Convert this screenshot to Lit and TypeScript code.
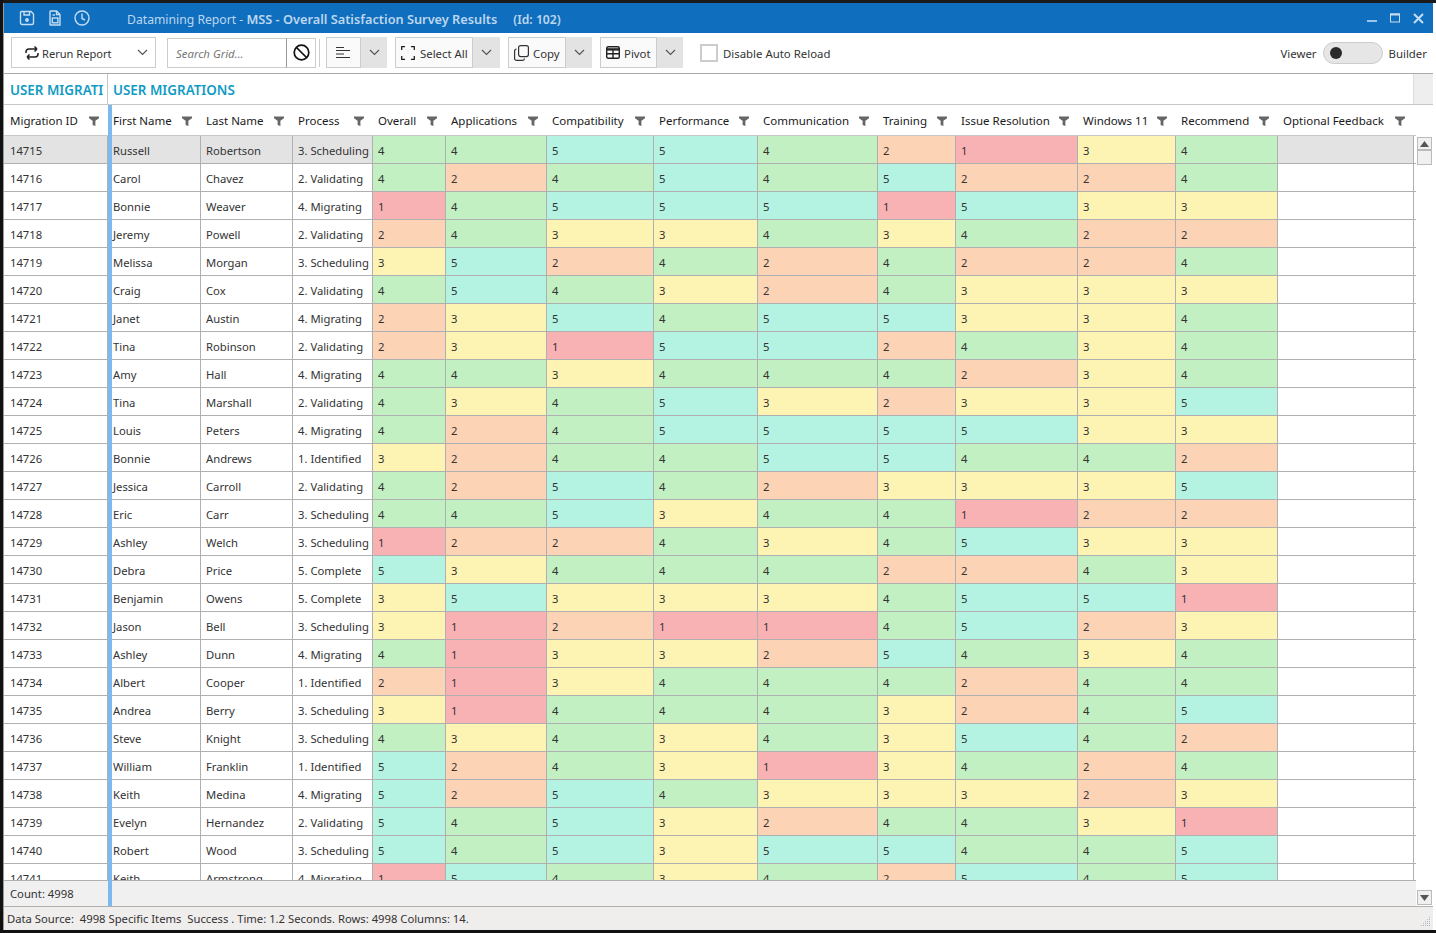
import { LitElement, html, css, svg } from "lit";
import { customElement } from "lit/decorators.js";

const RAW = `14715 Russell Robertson 3.Scheduling 445542134
14716 Carol Chavez 2.Validating 424545224
14717 Bonnie Weaver 4.Migrating 145551533
14718 Jeremy Powell 2.Validating 243343422
14719 Melissa Morgan 3.Scheduling 352424224
14720 Craig Cox 2.Validating 454324333
14721 Janet Austin 4.Migrating 235455334
14722 Tina Robinson 2.Validating 231552434
14723 Amy Hall 4.Migrating 443444234
14724 Tina Marshall 2.Validating 434532335
14725 Louis Peters 4.Migrating 424555533
14726 Bonnie Andrews 1.Identified 324455442
14727 Jessica Carroll 2.Validating 425423335
14728 Eric Carr 3.Scheduling 445344122
14729 Ashley Welch 3.Scheduling 122434533
14730 Debra Price 5.Complete 534442243
14731 Benjamin Owens 5.Complete 353334551
14732 Jason Bell 3.Scheduling 312114523
14733 Ashley Dunn 4.Migrating 413325434
14734 Albert Cooper 1.Identified 213444244
14735 Andrea Berry 3.Scheduling 314443245
14736 Steve Knight 3.Scheduling 434343542
14737 William Franklin 1.Identified 524313424
14738 Keith Medina 4.Migrating 525433323
14739 Evelyn Hernandez 2.Validating 545324431
14740 Robert Wood 3.Scheduling 545355445
14741 Keith Armstrong 4.Migrating 154342545`;

const ROWS = RAW.split("\n").map((l) => {
  const [id, first, last, proc, scores] = l.split(" ");
  return { id, first, last, proc: proc.replace(".", ". "), scores: scores.split("") };
});

const COLS = ["First Name", "Last Name", "Process", "Overall", "Applications", "Compatibility", "Performance", "Communication", "Training", "Issue Resolution", "Windows 11", "Recommend", "Optional Feedback"];

const funnel = html`<svg class="funnel" width="10" height="10" viewBox="0 0 10 10"><path d="M0 0.5H10V2.2L6.4 4.8V10L3.6 9V4.8L0 2.2Z" fill="#666"/></svg>`;
const chevron = html`<svg width="11" height="7" viewBox="0 0 11 7" fill="none" stroke="#555" stroke-width="1.2"><path d="M1 1L5.5 5.5L10 1"/></svg>`;

const tIcon = (body: unknown) => html`<svg class="ticon" width="16" height="16" viewBox="0 0 16 16" fill="none" stroke="#c5def3" stroke-width="1.4">${body}</svg>`;
const saveIcon = tIcon(svg`<path d="M2.5 1.5H12L14.5 4V13A1.5 1.5 0 0 1 13 14.5H3A1.5 1.5 0 0 1 1.5 13V2.5A1 1 0 0 1 2.5 1.5Z"/><path d="M5 1.5V5H10.5V1.5"/><circle cx="8" cy="10" r="1.2" fill="#c5def3"/>`);
const docIcon = tIcon(svg`<path d="M3.5 1H9.5L13 4.5V15H3.5A0.5 0.5 0 0 1 3 14.5V1.5A.5.5 0 0 1 3.5 1Z"/><path d="M9.5 1V4.5H13"/><rect x="5.3" y="8" width="5.6" height="4.8"/><path d="M5.5 5H8"/>`);
const clockIcon = tIcon(svg`<circle cx="8" cy="8" r="7"/><path d="M8 3.5V8.5L11 10"/>`);

@customElement("app-root")
export class AppRoot extends LitElement {
  static styles = css`
    :host {
      display: block;
      width: 1436px;
      height: 933px;
      box-sizing: border-box;
      padding: 3px 3px 3px 3px;
      background: linear-gradient(#1a1a1a 0 3px, #fff 3px 930px, #111 930px);
      font-family: "Noto Sans", "Open Sans", sans-serif;
      font-size: 11.25px;
      color: #333;
      overflow: hidden;
      position: relative;
    }
    :host::before {
      content: "";
      position: absolute;
      left: 0;
      top: 0;
      bottom: 0;
      width: 3px;
      background: #111;
    }
    .window {
      height: 927px;
      width: 1430px;
      display: flex;
      flex-direction: column;
      background: #fff;
      box-sizing: border-box;
      border-left: 1px solid #999;
      overflow: hidden;
    }
    .title {
      height: 30px;
      flex: none;
      background: #106ebe;
      margin-left: -1px;
      display: flex;
      align-items: center;
      padding-left: 16px;
      color: #bcd7ef;
      font-size: 12.2px;
    }
    .ticons { display: flex; gap: 11.5px; width: 108px; align-items: center; }
    .ticon { flex: none; }
    .ttext { padding-top: 2px; }
    .ttext b { font-weight: 600; font-size: 12.75px; }
    .ttext .id { margin-left: 16px; font-weight: 600; }
    .wbtns { margin-left: auto; display: flex; gap: 13px; padding-right: 9px; align-items: center; }
    .toolbar {
      height: 41px;
      flex: none;
      box-sizing: border-box;
      border-bottom: 1px solid #aaa;
      display: flex;
      align-items: center;
      padding-left: 7px;
      padding-bottom: 1px;
      color: #333;
      font-size: 11.4px;
    }
    .toolbar span { display: block; padding-top: 2px; }
    .btn {
      height: 31px;
      box-sizing: border-box;
      border: 1px solid #ccc;
      background: #fafafa;
      display: flex;
      align-items: center;
      white-space: nowrap;
    }
    .rerun { width: 145px; background: #fff; padding-left: 12px; gap: 2px; }
    .rerun .lbl { font-size: 11.1px; }
    .toolbar .chev { margin-left: auto; margin-right: 7px; display: flex; padding-top: 0; }
    .search {
      height: 30px;
      box-sizing: border-box;
      width: 120px;
      margin-left: 11px;
      border: 1px solid #ccc;
      border-right: 1px solid #999;
      padding: 2px 0 0 8px;
      display: flex;
      align-items: center;
      font-style: italic;
      color: #777;
    }
    .stop {
      height: 30px;
      width: 29px;
      box-sizing: border-box;
      border: 1px solid #ccc;
      border-left: none;
      display: flex;
      align-items: center;
      justify-content: center;
    }
    .sep { width: 1px; height: 28px; background: #ccc; margin: 0 6px 0 3px; }
    .drop {
      height: 31px;
      background: #e3e3e3;
      display: flex;
      align-items: center;
      justify-content: center;
      flex: none;
    }
    .align { width: 35px; justify-content: center; padding-right: 2px; }
    .d26 { width: 26px; }
    .d27 { width: 27px; }
    .selectall { width: 78px; margin-left: 8px; padding-left: 5px; gap: 5px; }
    .copy { width: 58px; margin-left: 8px; padding-left: 5px; gap: 4px; }
    .pivot { width: 57px; margin-left: 8px; padding-left: 5px; gap: 4px; }
    .check {
      width: 18px;
      height: 18px;
      box-sizing: border-box;
      border: 2px solid #ccc;
      background: #fff;
      margin-left: 17px;
      margin-right: 5px;
    }
    .mode { margin-left: auto; display: flex; align-items: center; padding-right: 6px; }
    .switch {
      width: 60px;
      height: 22px;
      box-sizing: border-box;
      border: 1px solid #ccc;
      border-radius: 11px;
      background: #e6e6e6;
      margin: 0 6px;
      display: flex;
      align-items: center;
      padding-left: 6px;
    }
    .knob { width: 12px; height: 12px; border-radius: 50%; background: #2b2b2b; }
    .band {
      height: 31px;
      flex: none;
      box-sizing: border-box;
      border-bottom: 1px solid #c8c8c8;
      display: flex;
      color: #0f9bc4;
      font-weight: 600;
      font-size: 13.4px;
      line-height: 32px;
    }
    .band1 {
      width: 104px;
      box-sizing: border-box;
      padding-left: 6px;
      border-right: 1px solid #c8c8c8;
      white-space: nowrap;
      overflow: hidden;
      flex: none;
    }
    .band1 span { display: block; width: 93px; overflow: hidden; }
    .band2 { flex: 1; padding-left: 5px; }
    .band3 { width: 19px; background: #eee; border-left: 1px solid #ddd; flex: none; }
    .main { flex: 1; min-height: 0; display: flex; }
    .pane { display: flex; flex-direction: column; min-width: 0; }
    .frozen { width: 104px; flex: none; }
    .rest { width: 1304px; flex: none; }
    .splitter { width: 4px; flex: none; background: #7db9ef; }
    .hrow, .row { display: grid; }
    .frozen .hrow, .frozen .row { grid-template-columns: 104px; }
    .rest .hrow, .rest .row {
      grid-template-columns: 89px 92px 80px 73px 101px 107px 104px 120px 78px 122px 98px 102px 136px 2px;
    }
    .hrow { height: 31px; flex: none; box-sizing: border-box; border-bottom: 1px solid #c8c8c8; color: #1a1a1a; font-size: 11.5px; }
    .hcell {
      display: flex;
      align-items: center;
      justify-content: space-between;
      padding: 0 9px 0 6px;
      white-space: nowrap;
      min-width: 0;
    }
    .rest .hcell { padding-left: 5px; }
    .rest .hcell:first-child { padding-left: 1px; }
    .funnel { flex: none; margin-top: 1px; }
    .body { flex: 1; min-height: 0; overflow: hidden; }
    .row { height: 28px; box-sizing: border-box; border-bottom: 1px solid #b0b0b0; }
    .cell {
      box-sizing: border-box;
      height: 27px;
      border-right: 1px solid #b0b0b0;
      padding-left: 5px;
      line-height: 29px;
      white-space: nowrap;
      overflow: hidden;
      min-width: 0;
    }
    .frozen .cell { padding-left: 6px; }
    .rest .cell:first-child { padding-left: 1px; }
    .cell.fill { border-right: none; padding: 0; }
    .sel .plain { background: #e3e3e3; }
    .s1 { background: #f9b2b4; }
    .s2 { background: #fdd3b6; }
    .s3 { background: #fdf3b3; }
    .s4 { background: #c2f0c2; }
    .s5 { background: #b4f3e2; }
    .foot {
      height: 26px;
      flex: none;
      box-sizing: border-box;
      background: #f0f0f0;
      border-top: 1px solid #b0b0b0;
      padding-left: 6px;
      line-height: 25px;
    }
    .scroll {
      width: 16px;
      flex: none;
      position: relative;
      padding-top: 1px;
      display: flex;
      flex-direction: column;
      align-items: center;
      box-sizing: border-box;
    }
    .sbtn {
      width: 15px;
      height: 13px;
      flex: none;
      box-sizing: border-box;
      background: #f0f0f0;
      border: 1px solid #bbb;
      display: flex;
      align-items: center;
      justify-content: center;
    }
    .sthumb {
      width: 15px;
      height: 15px;
      flex: none;
      box-sizing: border-box;
      background: #f0f0f0;
      border: 1px solid #bbb;
      margin-bottom: auto;
    }
    .sdown { height: 15px; margin-bottom: 1px; }
    .status {
      height: 24px;
      flex: none;
      box-sizing: border-box;
      background: #f0eded;
      border-top: 1px solid #b0b0b0;
      padding-left: 3px;
      line-height: 23px;
      position: relative;
      white-space: pre;
    }
    .grip { position: absolute; right: 2px; bottom: 2px; }
  `;

  render() {
    return html`<div class="window">
      <div class="title">
        <div class="ticons">${saveIcon}${docIcon}${clockIcon}</div>
        <div class="ttext">Datamining Report - <b>MSS - Overall Satisfaction Survey Results</b><span class="id">(Id: 102)</span></div>
        <div class="wbtns">
          <svg width="10" height="10" viewBox="0 0 10 10"><path d="M0 8H10" stroke="#c5def3" stroke-width="1.6"/></svg>
          <svg width="10" height="10" viewBox="0 0 10 10" fill="none" stroke="#c5def3"><rect x=".5" y="1" width="9" height="8"/><path d="M0 1.5H10" stroke-width="2"/></svg>
          <svg width="11" height="11" viewBox="0 0 11 11"><path d="M1 1L10 10M10 1L1 10" stroke="#c5def3" stroke-width="2"/></svg>
        </div>
      </div>
      <div class="toolbar">
        <div class="btn rerun">
          <svg width="16" height="16" viewBox="0 0 16 16" fill="none" stroke="#222" stroke-width="1.5"><path d="M2 8V7A3 3 0 0 1 5 4H13M13 4L10.5 1.5M13 4L10.5 6.5" /><path d="M14 8V9A3 3 0 0 1 11 12H3M3 12L5.5 9.5M3 12L5.5 14.5"/></svg>
          <span class="lbl">Rerun Report</span><span class="chev">${chevron}</span>
        </div>
        <div class="search">Search Grid...</div>
        <div class="stop"><svg width="17" height="17" viewBox="0 0 17 17" fill="none" stroke="#111" stroke-width="1.7"><circle cx="8.5" cy="8.5" r="7.3"/><path d="M3.5 3.5L13.5 13.5"/></svg></div>
        <div class="sep"></div>
        <div class="btn align"><svg width="14" height="13" viewBox="0 0 14 13" stroke="#333"><path d="M0 1.5H8M0 4.5H14M0 8H8M0 11.5H14"/></svg></div>
        <div class="drop d26">${chevron}</div>
        <div class="btn selectall">
          <svg width="14" height="14" viewBox="0 0 14 14" fill="none" stroke="#222" stroke-width="1.3"><path d="M.7 4V.7H4M10 .7H13.3V4M13.3 10V13.3H10M4 13.3H.7V10"/></svg>
          <span>Select All</span>
        </div>
        <div class="drop d27">${chevron}</div>
        <div class="btn copy">
          <svg width="15" height="16" viewBox="0 0 15 16" fill="none" stroke="#333" stroke-width="1.2"><rect x="4.6" y=".6" width="9.8" height="11" rx="2"/><path d="M2.6 4A2 2 0 0 0 .6 6V13.4A2 2 0 0 0 2.6 15.4H8.5A2 2 0 0 0 10.5 13.5"/></svg>
          <span>Copy</span>
        </div>
        <div class="drop d26">${chevron}</div>
        <div class="btn pivot">
          <svg width="14" height="13" viewBox="0 0 14 13" fill="none" stroke="#222" stroke-width="1.4"><rect x=".7" y=".7" width="12.6" height="11.6" rx="1.5"/><path d="M.7 3.4H13.3" stroke-width="2.4"/><path d="M.7 7.7H13.3M7 3V12.3"/></svg>
          <span>Pivot</span>
        </div>
        <div class="drop d26">${chevron}</div>
        <div class="check"></div>
        <span>Disable Auto Reload</span>
        <div class="mode"><span>Viewer</span><div class="switch"><div class="knob"></div></div><span>Builder</span></div>
      </div>
      <div class="band">
        <div class="band1"><span>USER MIGRATIONS</span></div>
        <div class="band2">USER MIGRATIONS</div>
        <div class="band3"></div>
      </div>
      <div class="main">
        <div class="pane frozen">
          <div class="hrow"><div class="hcell"><span>Migration ID</span>${funnel}</div></div>
          <div class="body">
            ${ROWS.map((r, i) => html`<div class="row ${i === 0 ? "sel" : ""}"><div class="cell plain">${r.id}</div></div>`)}
          </div>
          <div class="foot">Count: 4998</div>
        </div>
        <div class="splitter"></div>
        <div class="pane rest">
          <div class="hrow">
            ${COLS.map((c) => html`<div class="hcell"><span>${c}</span>${funnel}</div>`)}
            <div></div>
          </div>
          <div class="body">
            ${ROWS.map((r, i) => html`<div class="row ${i === 0 ? "sel" : ""}">
              <div class="cell plain">${r.first}</div>
              <div class="cell plain">${r.last}</div>
              <div class="cell plain">${r.proc}</div>
              ${r.scores.map((s) => html`<div class="cell s${s}">${s}</div>`)}
              <div class="cell plain"></div>
              <div class="cell fill"></div>
            </div>`)}
          </div>
          <div class="foot"></div>
        </div>
        <div class="scroll">
          <div style="height:31px;flex:none"></div>
          <div class="sbtn"><svg width="9" height="6" viewBox="0 0 9 6"><path d="M4.5 0L9 6H0Z" fill="#555"/></svg></div>
          <div class="sthumb"></div>
          <div class="sbtn sdown"><svg width="9" height="6" viewBox="0 0 9 6"><path d="M4.5 6L9 0H0Z" fill="#555"/></svg></div>
        </div>
      </div>
      <div class="status">Data Source:  4998 Specific Items  Success . Time: 1.2 Seconds. Rows: 4998 Columns: 14.
        <svg class="grip" width="12" height="12" viewBox="0 0 12 12" fill="#a9b8cf"><rect x="10" y="1" width="1" height="1"/><rect x="8" y="3" width="1" height="1"/><rect x="10" y="3" width="1" height="1"/><rect x="6" y="5" width="1" height="1"/><rect x="8" y="5" width="1" height="1"/><rect x="10" y="5" width="1" height="1"/><rect x="4" y="7" width="1" height="1"/><rect x="6" y="7" width="1" height="1"/><rect x="8" y="7" width="1" height="1"/><rect x="10" y="7" width="1" height="1"/><rect x="2" y="9" width="1" height="1"/><rect x="4" y="9" width="1" height="1"/><rect x="6" y="9" width="1" height="1"/><rect x="8" y="9" width="1" height="1"/><rect x="10" y="9" width="1" height="1"/></svg>
      </div>
    </div>`;
  }
}
